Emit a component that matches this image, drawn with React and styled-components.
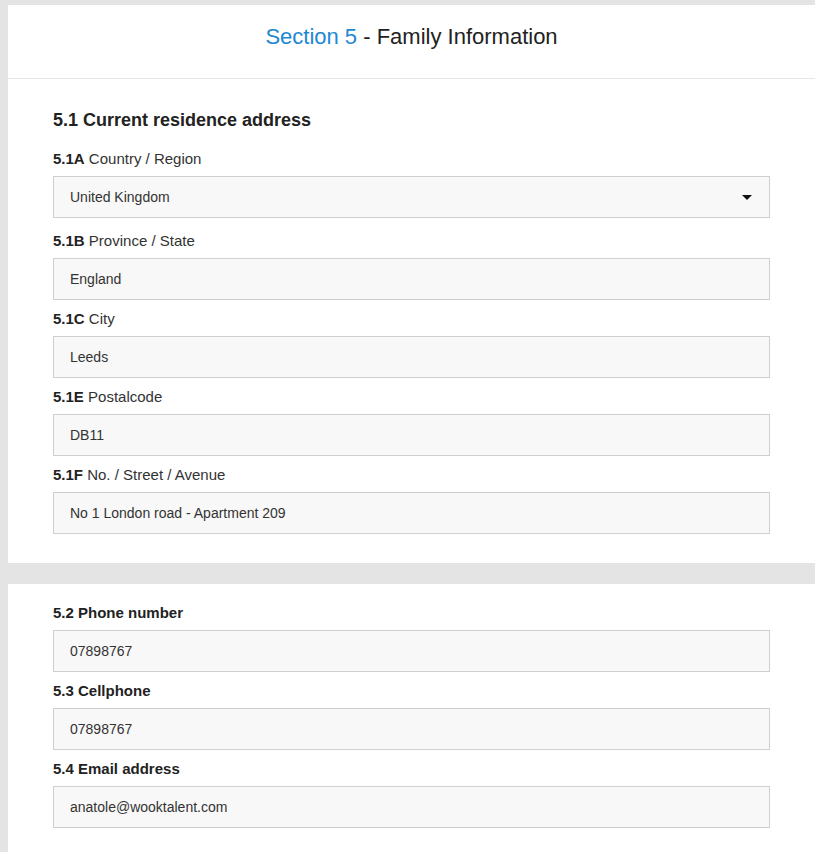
import React from "react";
import styled, { createGlobalStyle } from "styled-components";

const GlobalStyle = createGlobalStyle`
  html, body {
    margin: 0;
    padding: 0;
    background: #e4e4e4;
    font-family: "Liberation Sans", Arial, sans-serif;
    color: #222;
  }
`;

const Page = styled.div`
  padding: 5px 0 0 8px;
  display: flex;
  flex-direction: column;
  gap: 21px;
`;

const Card = styled.section`
  background: #fff;
`;

const Header = styled.header`
  height: 74px;
  border-bottom: 1px solid #e6e6e6;
  display: flex;
  align-items: center;
  justify-content: center;
  box-sizing: border-box;
  padding-bottom: 10px;
`;

const Title = styled.h1`
  margin: 0;
  font-size: 22px;
  font-weight: normal;
  color: #222;
  span {
    color: #1e88d2;
  }
`;

const Body = styled.div`
  padding: ${(p) => p.$top}px 45px ${(p) => p.$bottom}px;
`;

const Heading = styled.h2`
  margin: 0 0 19px;
  font-size: 18px;
  line-height: 20px;
  font-weight: bold;
  color: #222;
`;

const Field = styled.div`
  margin-bottom: ${(p) => p.$gap ?? 9}px;
  &:last-child {
    margin-bottom: 0;
  }
`;

const Label = styled.label`
  display: block;
  font-size: 15px;
  line-height: 20px;
  margin-bottom: 7px;
  color: #333;
  b {
    color: #222;
  }
`;

const Input = styled.div`
  position: relative;
  height: 42px;
  box-sizing: border-box;
  border: 1px solid #cfcfcf;
  background: #f8f8f8;
  display: flex;
  align-items: center;
  padding: 0 16px;
  font-size: 14px;
  color: #333;
`;

const Caret = styled.span`
  position: absolute;
  right: 17px;
  top: 18px;
  width: 0;
  height: 0;
  border-left: 5px solid transparent;
  border-right: 5px solid transparent;
  border-top: 5px solid #111;
`;

const address = [
  { code: "5.1A", name: "Country / Region", value: "United Kingdom", select: true },
  { code: "5.1B", name: "Province / State", value: "England" },
  { code: "5.1C", name: "City", value: "Leeds" },
  { code: "5.1E", name: "Postalcode", value: "DB11" },
  { code: "5.1F", name: "No. / Street / Avenue", value: "No 1 London road - Apartment 209" },
];

const contact = [
  { name: "5.2 Phone number", value: "07898767" },
  { name: "5.3 Cellphone", value: "07898767" },
  { name: "5.4 Email address", value: "anatole@wooktalent.com" },
];

export default function App() {
  return (
    <>
      <GlobalStyle />
      <Page>
        <Card>
          <Header>
            <Title>
              <span>Section 5</span> - Family Information
            </Title>
          </Header>
          <Body $top={31} $bottom={29}>
            <Heading>5.1 Current residence address</Heading>
            {address.map((f) => (
              <Field key={f.code} $gap={f.select ? 13 : 9}>
                <Label>
                  <b>{f.code}</b> {f.name}
                </Label>
                <Input>
                  {f.value}
                  {f.select && <Caret />}
                </Input>
              </Field>
            ))}
          </Body>
        </Card>
        <Card>
          <Body $top={19} $bottom={24}>
            {contact.map((f) => (
              <Field key={f.name}>
                <Label>
                  <b>{f.name}</b>
                </Label>
                <Input>{f.value}</Input>
              </Field>
            ))}
          </Body>
        </Card>
      </Page>
    </>
  );
}
